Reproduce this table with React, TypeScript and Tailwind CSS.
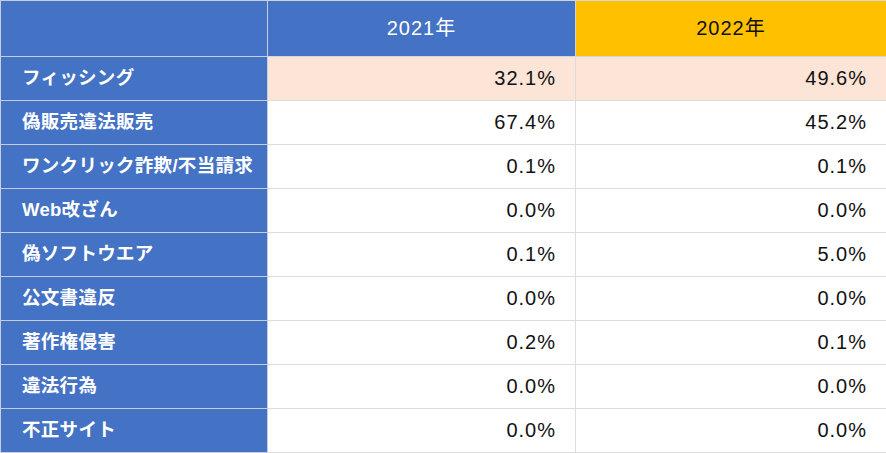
const ROWS: { label: string; y2021: string; y2022: string; highlight?: boolean }[] = [
  { label: 'フィッシング', y2021: '32.1%', y2022: '49.6%', highlight: true },
  { label: '偽販売違法販売', y2021: '67.4%', y2022: '45.2%' },
  { label: 'ワンクリック詐欺/不当請求', y2021: '0.1%', y2022: '0.1%' },
  { label: 'Web改ざん', y2021: '0.0%', y2022: '0.0%' },
  { label: '偽ソフトウエア', y2021: '0.1%', y2022: '5.0%' },
  { label: '公文書違反', y2021: '0.0%', y2022: '0.0%' },
  { label: '著作権侵害', y2021: '0.2%', y2022: '0.1%' },
  { label: '違法行為', y2021: '0.0%', y2022: '0.0%' },
  { label: '不正サイト', y2021: '0.0%', y2022: '0.0%' },
]

const FONT = '"Liberation Sans", "Noto Sans CJK JP", sans-serif'

export default function App() {
  return (
    <div className="w-[886px] h-[453px] bg-white" style={{ fontFamily: FONT }}>
      <table className="w-[886px] border-collapse table-fixed">
        <colgroup>
          <col className="w-[267px]" />
          <col className="w-[308px]" />
          <col className="w-[311px]" />
        </colgroup>
        <thead>
          <tr className="h-[56px]">
            <th className="bg-[#4472c4] border border-[#c5cfe0]" />
            <th className="bg-[#4472c4] border border-[#d4d4d4] text-white font-normal text-center text-[20px] tracking-[1px] pb-[2px]">
              2021年
            </th>
            <th className="bg-[#ffc000] border border-[#d4d4d4] text-[#111] font-normal text-center text-[20px] tracking-[1px] pb-[2px]">
              2022年
            </th>
          </tr>
        </thead>
        <tbody>
          {ROWS.map(r => (
            <tr key={r.label} className="h-[44px]">
              <td className="bg-[#4472c4] border border-[#c5cfe0] text-white font-semibold text-[18.5px] tracking-[0.3px] pl-[21px] pb-[2px] whitespace-nowrap">
                {r.label}
              </td>
              <td
                className={`border border-[#dcdcdc] text-right pr-[19px] pb-[2px] text-[20px] tracking-[1px] text-[#111] ${
                  r.highlight ? 'bg-[#fce4d6]' : 'bg-white'
                }`}
              >
                {r.y2021}
              </td>
              <td
                className={`border border-[#dcdcdc] text-right pr-[19px] pb-[2px] text-[20px] tracking-[1px] text-[#111] ${
                  r.highlight ? 'bg-[#fce4d6]' : 'bg-white'
                }`}
              >
                {r.y2022}
              </td>
            </tr>
          ))}
        </tbody>
      </table>
    </div>
  )
}
